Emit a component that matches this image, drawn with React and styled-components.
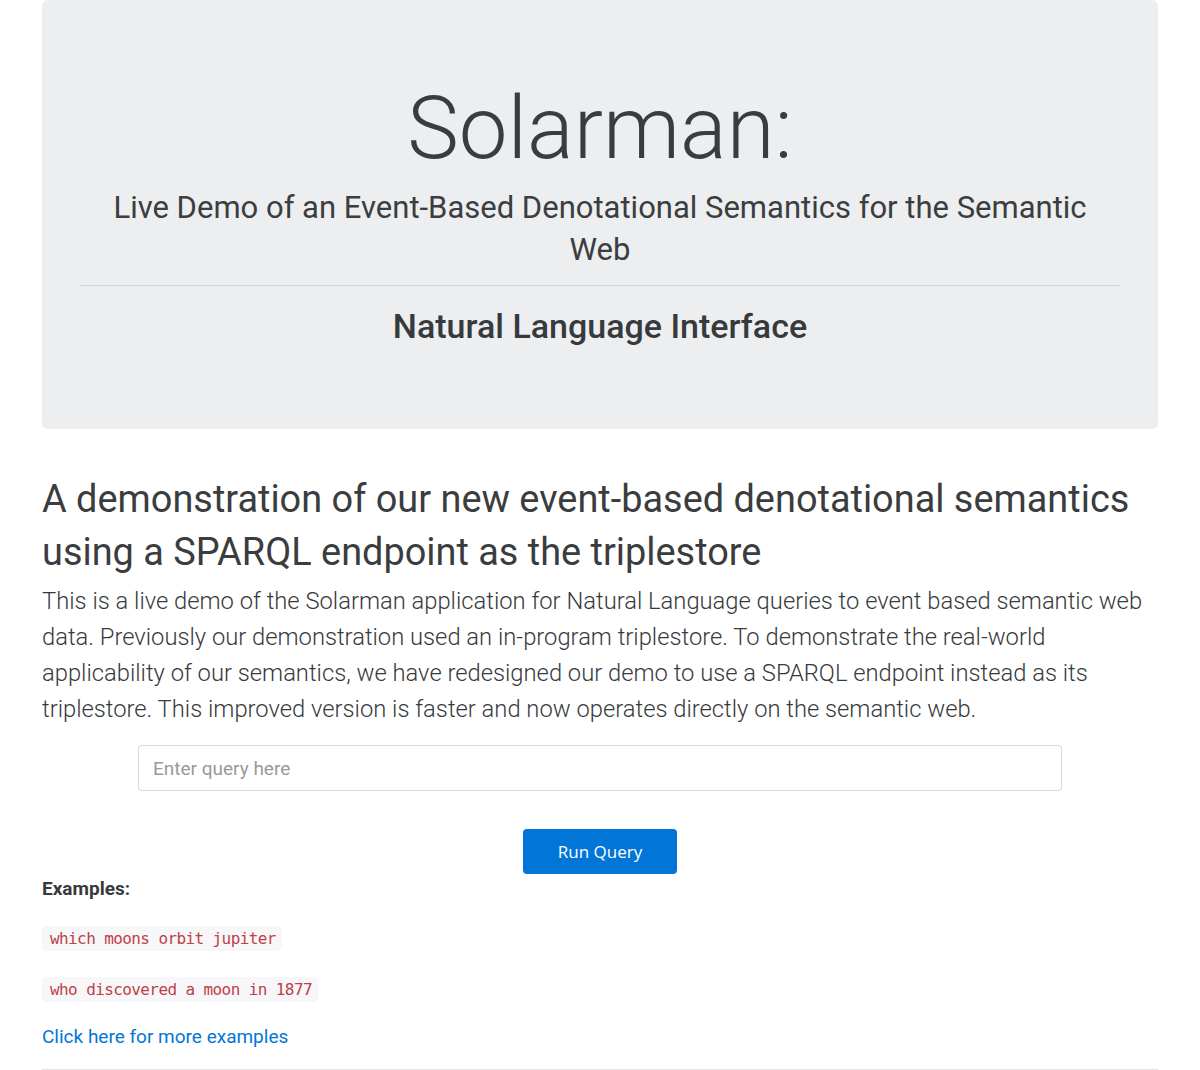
import React from 'react';
import styled, { createGlobalStyle } from 'styled-components';

const GlobalStyle = createGlobalStyle`
    body{
        margin: 0;
        background: #fff;
        font-family: Roboto, "Liberation Sans", sans-serif;
        font-size: 19px;
        line-height: 1.5;
        color: #373a3c;
    }
    *{
        box-sizing: border-box;
    }
`;

function App(){
    const examples = [
        'which moons orbit jupiter',
        'who discovered a moon in 1877',
    ];

    return(
        <>
        <GlobalStyle />
        <StyledContainer>
            <StyledJumbotron>
                <h1>Solarman:</h1>
                <h2>Live Demo of an Event-Based Denotational Semantics for the Semantic Web</h2>
                <hr />
                <h3>Natural Language Interface</h3>
            </StyledJumbotron>
            <StyledIntro>
                <h2>A demonstration of our new event-based denotational semantics using a SPARQL endpoint as the triplestore</h2>
                <p>
                    This is a live demo of the Solarman application for Natural Language queries to event based semantic web
                    data. Previously our demonstration used an in-program triplestore. To demonstrate the real-world
                    applicability of our semantics, we have redesigned our demo to use a SPARQL endpoint instead as its
                    triplestore. This improved version is faster and now operates directly on the semantic web.
                </p>
            </StyledIntro>
            <StyledQueryForm>
                <StyledInput type="text" placeholder="Enter query here" />
                <StyledButton type="button">Run Query</StyledButton>
            </StyledQueryForm>
            <StyledExamples>
                <h4>Examples:</h4>
                {examples.map((example) => (
                    <StyledExample key={example}>
                        <code>{example}</code>
                    </StyledExample>
                ))}
                <StyledLink href="#">Click here for more examples</StyledLink>
            </StyledExamples>
            <StyledRule />
        </StyledContainer>
        </>
    )
}

const StyledContainer = styled.div`
    width: 1116px;
    margin: 0 auto;
`;

const StyledJumbotron = styled.div`
    background: #eceef0;
    border-radius: 6px;
    padding: 73px 38px 82px;
    text-align: center;
    h1{
        margin: 0;
        font-size: 87px;
        font-weight: 300;
        line-height: 110px;
        color: #3b3c3e;
    }
    h2{
        margin: 4px 0 0;
        font-size: 31px;
        font-weight: 400;
        line-height: 42px;
        color: #3b3d3f;
    }
    hr{
        margin: 14px 0 0;
        border: 0;
        border-top: 1px solid rgba(0, 0, 0, 0.1);
    }
    h3{
        margin: 19px 0 0;
        font-size: 34px;
        font-weight: 500;
        line-height: 42px;
        color: #373a3c;
    }
`;

const StyledIntro = styled.div`
    margin-top: 44px;
    h2{
        margin: 0;
        font-size: 37.9px;
        font-weight: 400;
        line-height: 53px;
        color: #3a3c3e;
    }
    p{
        margin: 4px 0 0;
        font-size: 23.75px;
        font-weight: 300;
        line-height: 36px;
    }
`;

const StyledQueryForm = styled.div`
    display: flex;
    flex-direction: column;
    align-items: center;
    margin-top: 18px;
`;

const StyledInput = styled.input`
    width: 924px;
    height: 46px;
    padding: 0 14px;
    border: 1px solid rgba(0, 0, 0, 0.15);
    border-radius: 4px;
    font-family: Roboto, "Liberation Sans", sans-serif;
    font-size: 19px;
    color: #373a3c;
    &::placeholder{
        color: #9a9a9a;
    }
`;

const StyledButton = styled.button`
    margin-top: 38px;
    width: 154px;
    height: 45px;
    border: 0;
    border-radius: 4px;
    background: #0275d8;
    color: #fff;
    font-family: "Open Sans", Roboto, sans-serif;
    font-size: 17px;
    cursor: pointer;
`;

const StyledExamples = styled.div`
    margin-top: 1px;
    h4{
        margin: 0;
        font-size: 19px;
        font-weight: 700;
        line-height: 28px;
    }
`;

const StyledExample = styled.p`
    margin: 20px 0 0;
    line-height: 30px;
    code{
        font-family: "DejaVu Sans Mono", "Liberation Mono", monospace;
        font-size: 16px;
        letter-spacing: -0.6px;
        color: #bd4147;
        background: #f7f7f9;
        padding: 3px 6px 3px 8px;
        border-radius: 4px;
    }
`;

const StyledLink = styled.a`
    display: block;
    margin-top: 18px;
    font-size: 19px;
    line-height: 28px;
    color: #0275d8;
    text-decoration: none;
`;

const StyledRule = styled.hr`
    margin: 18px 0 0;
    border: 0;
    border-top: 1px solid rgba(0, 0, 0, 0.1);
`;

export default App
